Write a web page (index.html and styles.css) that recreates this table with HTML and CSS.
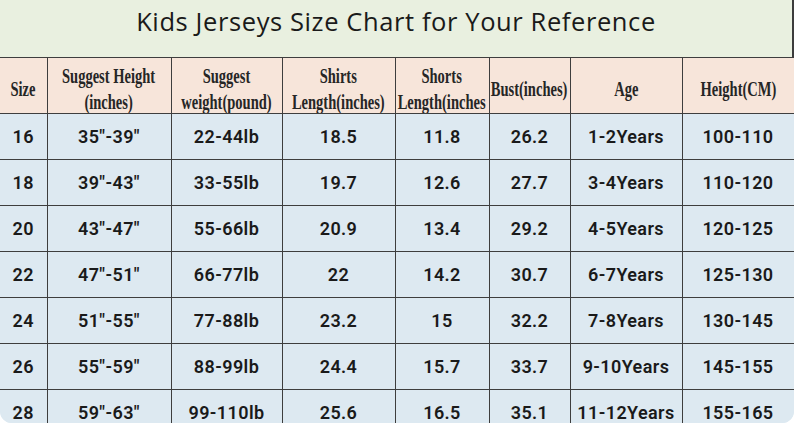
FILE: index.html
```html
<!DOCTYPE html>
<html>
<head>
<meta charset="utf-8">
<link rel="stylesheet" href="styles.css">
</head>
<body>
<div class="chart">
  <div class="title">Kids Jerseys Size Chart for Your Reference</div>
  <table class="grid">
    <colgroup>
      <col class="c1"><col class="c2"><col class="c3"><col class="c4"><col class="c5"><col class="c6"><col class="c7"><col class="c8">
    </colgroup>
    <thead>
      <tr>
        <th><span class="hl">Size</span></th>
        <th><span class="hl">Suggest Height<br>(inches)</span></th>
        <th><span class="hl">Suggest<br>weight(pound)</span></th>
        <th><span class="hl">Shirts<br>Length(inches)</span></th>
        <th><span class="hl">Shorts<br>Length(inches</span></th>
        <th><span class="hl">Bust(inches)</span></th>
        <th><span class="hl">Age</span></th>
        <th><span class="hl">Height(CM)</span></th>
      </tr>
    </thead>
    <tbody>
      <tr><td>16</td><td>35"-39"</td><td>22-44lb</td><td>18.5</td><td>11.8</td><td>26.2</td><td>1-2Years</td><td>100-110</td></tr>
      <tr><td>18</td><td>39"-43"</td><td>33-55lb</td><td>19.7</td><td>12.6</td><td>27.7</td><td>3-4Years</td><td>110-120</td></tr>
      <tr><td>20</td><td>43"-47"</td><td>55-66lb</td><td>20.9</td><td>13.4</td><td>29.2</td><td>4-5Years</td><td>120-125</td></tr>
      <tr><td>22</td><td>47"-51"</td><td>66-77lb</td><td>22</td><td>14.2</td><td>30.7</td><td>6-7Years</td><td>125-130</td></tr>
      <tr><td>24</td><td>51"-55"</td><td>77-88lb</td><td>23.2</td><td>15</td><td>32.2</td><td>7-8Years</td><td>130-145</td></tr>
      <tr><td>26</td><td>55"-59"</td><td>88-99lb</td><td>24.4</td><td>15.7</td><td>33.7</td><td>9-10Years</td><td>145-155</td></tr>
      <tr><td>28</td><td>59"-63"</td><td>99-110lb</td><td>25.6</td><td>16.5</td><td>35.1</td><td>11-12Years</td><td>155-165</td></tr>
    </tbody>
  </table>
</div>
</body>
</html>
```

FILE: styles.css
```css
html, body {
  margin: 0;
  padding: 0;
  background: #ffffff;
}

.chart {
  width: 794px;
  height: 423px;
  overflow: hidden;
  border-bottom-left-radius: 12px;
  border-bottom-right-radius: 12px;
  background: #dde9f1;
}

.title {
  height: 57px;
  box-sizing: border-box;
  padding-top: 4px;
  background: #e9f0e0;
  border-right: 2px solid #3c3c3c;
  font-family: "Open Sans", "Liberation Sans", sans-serif;
  font-size: 25.5px;
  letter-spacing: 0.6px;
  line-height: 34px;
  color: #1a1a1a;
  text-align: center;
}

.grid {
  width: 794px;
  border-collapse: collapse;
  table-layout: fixed;
}

.c1 { width: 47px; }
.c2 { width: 124px; }
.c3 { width: 111px; }
.c4 { width: 113px; }
.c5 { width: 94px; }
.c6 { width: 81px; }
.c7 { width: 112px; }
.c8 { width: 112px; }

.grid th,
.grid td {
  border: 1.5px solid #3e3e3e;
  padding: 0;
  text-align: center;
  overflow: hidden;
  white-space: nowrap;
}

.grid tr > :first-child {
  border-left: none;
}

.grid th {
  height: 55px;
  background: #f7e5da;
  font-family: "Liberation Serif", "Times New Roman", serif;
  font-weight: bold;
  font-size: 22px;
  line-height: 26px;
  color: #262626;
}

.hl {
  display: inline-block;
  margin: 0 -80px;
  transform: translateY(3px) scaleX(0.66);
  transform-origin: center center;
}

.grid td {
  height: 45px;
  background: #dde9f1;
  font-family: Roboto, "Liberation Sans", sans-serif;
  font-weight: 600;
  font-size: 18px;
  letter-spacing: 0.4px;
  color: #1a1a1a;
}
```
